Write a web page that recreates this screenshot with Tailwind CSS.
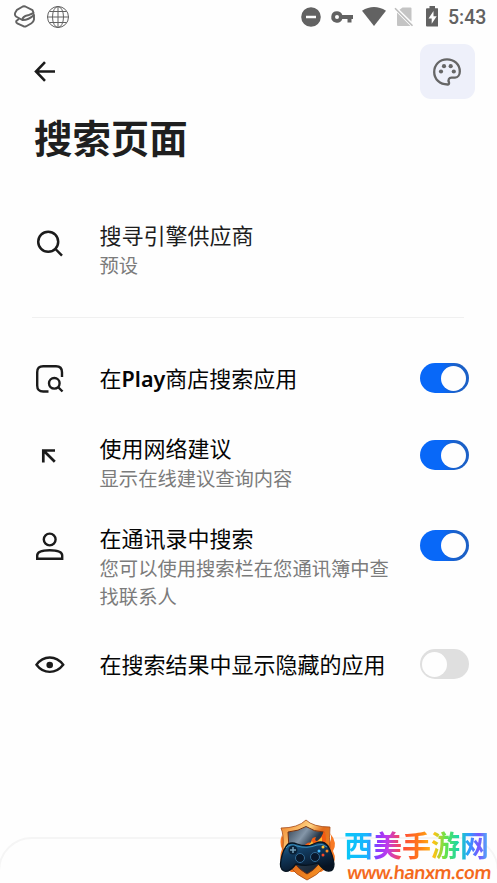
<!DOCTYPE html>
<html lang="zh-CN">
<head>
<meta charset="utf-8">
<title>搜索页面</title>
<script src="https://cdn.jsdelivr.net/npm/@tailwindcss/browser@4"></script>
</head>
<body class="bg-[#fefefe] font-['Noto_Sans_CJK_SC',sans-serif] text-[#050505]">
<div class="relative flex h-[883px] w-[497px] flex-col overflow-hidden">
  <!-- Status bar -->
  <header class="flex h-[34px] shrink-0 items-center justify-between pl-[13px] pr-[11px] text-[#626262]">
    <div class="flex items-center gap-[10px]">
      <svg class="h-[24px] w-[23px]" viewBox="0 0 23 24" fill="none" stroke="currentColor" stroke-width="1.900" stroke-linejoin="round" stroke-linecap="round"><path d="M9.300 15L3 11.500Q1.300 10 2.200 7.800L4 4.800L9.800 1.500Q11 1 12.300 1.500L19.500 5.200L20.600 8L15 10.300Q9.500 11.300 9.300 15Q15.500 15.200 21 10V14.500Q20.500 17 18.500 18.200L13.300 21.200Q11.800 22 10.300 21.200L4.200 18.300Q2.500 17 3.600 15.700L5.500 14.200"/></svg>
      <svg class="h-[24px] w-[24px]" viewBox="0 0 24 24" fill="none" stroke="currentColor" stroke-width="1"><circle cx="12" cy="12" r="10.500"/><ellipse cx="12" cy="12" rx="5.500" ry="10.500"/><path d="M12 1.500V22.500M1.500 12H22.500M3.500 6.500H20.500M3.500 17.500H20.500"/></svg>
    </div>
    <div class="flex items-center">
      <svg class="h-[24px] w-[137px]" viewBox="0 0 137 24" fill="currentColor"><path fill-rule="evenodd" d="M10 2.200a9.800 9.800 0 1 0 0 19.600a9.800 9.800 0 0 0 0-19.600M5 10.700h10v2.500H5z"/><path fill-rule="evenodd" d="M36 6.200a5.700 5.700 0 0 1 5.300 3.700H52v4h-1.500v3.500h-4v-3.500h-5.200A5.700 5.700 0 1 1 36 6.200m0 3.800a2 2 0 1 0 0 4a2 2 0 0 0 0-4"/><path d="M61 5.700Q73 -1.800 85 5.700L73 21Z"/><path fill="#c4c4c4" d="M101.500 2.500H109.500Q110.500 2.500 110.500 3.500V16.500L98.500 4.700ZM96 7.500V20Q96 21 97 21H109.500Z"/><path d="M94 3.300L111.500 20.800" stroke="#bcbcbc" stroke-width="1.600"/><path fill-rule="evenodd" d="M128.500 1h5.500v2.300h2.500q1 0 1 1V20.500q0 1-1 1H126q-1 0-1-1V4.300q0-1 1-1h2.500zM132.500 6l-5 7.500h3.200v5.300l5-7.600h-3.200z"/></svg>
      <span class="ml-[10px] w-[38px] whitespace-nowrap pt-[2px] font-[Roboto,sans-serif] text-[19.5px] font-medium leading-6">5:43</span>
    </div>
  </header>

  <nav class="mt-[10px] flex h-[55px] shrink-0 items-center justify-between pl-[34px] pr-[22px]">
    <svg class="h-[22px] w-[22px]" viewBox="0 0 22 22" fill="none" stroke="#1b1b1b" stroke-width="2.600"><path d="M21 10.500H2.500M11 1.200L2 10.500L11 19.800"/></svg>
    <div class="flex h-[55px] w-[55px] items-center justify-center rounded-[11px] bg-[#eef0fa] pr-[2px]">
      <svg class="h-[28px] w-[28px]" viewBox="0 0 28 28" fill="none" stroke="#666" stroke-width="2.300"><path d="M14 1.300C6.500 1.300 1.200 6.800 1.200 14S6.800 26.500 14.500 26.500C16 26.500 16.200 25.500 16 24.500C14.800 21.500 16 19.800 18.500 19.700H22C25 19.500 26.800 16.500 26.800 13.500C26.800 6.300 21 1.300 14 1.300Z"/><g fill="#666" stroke="none"><circle cx="8" cy="13.500" r="2.100"/><circle cx="11" cy="8.200" r="2.100"/><circle cx="17.700" cy="8.200" r="2.100"/><circle cx="20.800" cy="13.500" r="2.100"/></g></svg>
    </div>
  </nav>

  <h1 class="mt-[10px] h-[60px] shrink-0 pl-[34px] text-[38.4px] font-bold leading-[55px] text-[#1f1f1f]">搜索页面</h1>

  <main class="flex flex-col">
    <section class="mt-[52px] flex h-[58px] items-start">
      <div class="w-[99.600px] shrink-0 pl-[36px] pt-[9px]"><svg class="h-[28px] w-[28px]" viewBox="0 0 28 28" fill="none" stroke="#1b1b1b" stroke-width="2.500"><circle cx="12.200" cy="11.700" r="10"/><path d="M19 18.500L26 25.700"/></svg></div>
      <div><h2 class="h-[30px] text-[22px] leading-[26px] text-[#1d1d1d]">搜寻引擎供应商</h2><p class="text-[19.3px] leading-7 text-[#7b7b7b]">预设</p></div>
    </section>
    <hr class="ml-[32px] mt-[38px] w-[432px] border-[#f0f0f0]">

    <section class="mt-[46px] flex h-[30px] items-start">
      <div class="w-[99.600px] shrink-0 pl-[35px]"><svg class="h-[30px] w-[30px]" viewBox="0 0 30 30" fill="none" stroke="#1b1b1b" stroke-width="2.400"><path d="M13.500 27.500H8.200Q2.200 27.500 2.200 21.500V8.200Q2.200 2.200 8.200 2.200H21Q27 2.200 27 8.200V13"/><circle cx="19.300" cy="19.300" r="5.300"/><path d="M23 23L27.500 27.500"/></svg></div>
      <h2 class="w-[320.400px] text-[22px] leading-[26px]">在<span class="font-['Noto_Sans',sans-serif] text-[21.500px] font-semibold">Play</span>商店搜索应用</h2>
      <div class="-mt-px flex h-[30px] w-[49px] items-center justify-end rounded-full bg-[linear-gradient(90deg,#0868f8_45%,#1b60c7_75%)] px-[2.500px]"><i class="h-[25px] w-[25px] rounded-full bg-[#fefefe]"></i></div>
    </section>

    <section class="mt-[40px] flex h-[58px] items-start">
      <div class="w-[99.600px] shrink-0 pl-[41px] pt-[14px]"><svg class="h-[16px] w-[16px]" viewBox="0 0 16 16" fill="none" stroke="#1b1b1b" stroke-width="2.700"><path d="M2.300 14.500V2.500H14M2.500 2.500L13.800 13.800"/></svg></div>
      <div class="w-[320.400px]"><h2 class="h-[30px] text-[22px] leading-[26px]">使用网络建议</h2><p class="text-[19.3px] leading-7 text-[#7b7b7b]">显示在线建议查询内容</p></div>
      <div class="mt-[6px] flex h-[30px] w-[49px] items-center justify-end rounded-full bg-[linear-gradient(90deg,#0868f8_45%,#1b60c7_75%)] px-[2.500px]"><i class="h-[25px] w-[25px] rounded-full bg-[#fefefe]"></i></div>
    </section>

    <section class="mt-[32px] flex h-[86px] items-start">
      <div class="w-[99.600px] shrink-0 pl-[35px] pt-[7px]"><svg class="h-[30px] w-[30px]" viewBox="0 0 30 30" fill="none" stroke="#1b1b1b" stroke-width="2.400"><circle cx="14.700" cy="8.500" r="5.900"/><path d="M2.200 27.800V24.500C2.200 20.500 8 19.200 14.700 19.200S27.200 20.500 27.200 24.500V27.800Z"/></svg></div>
      <div class="w-[320.400px]"><h2 class="h-[30px] text-[22px] leading-[26px]">在通讯录中搜索</h2><p class="w-[292px] text-[19.3px] leading-7 text-[#7b7b7b]">您可以使用搜索栏在您通讯簿中查找联系人</p></div>
      <div class="mt-[6px] flex h-[31px] w-[49px] items-center justify-end rounded-full bg-[linear-gradient(90deg,#0868f8_45%,#1b60c7_75%)] px-[2.500px]"><i class="h-[25px] w-[25px] rounded-full bg-[#fefefe]"></i></div>
    </section>

    <section class="mt-[40px] flex h-[30px] items-start">
      <div class="w-[99.600px] shrink-0 pl-[35px] pt-[5px]"><svg class="h-[20px] w-[30px]" viewBox="0 0 30 20" fill="none" stroke="#1b1b1b" stroke-width="2.400"><path d="M1.500 9.800C5 4.800 9.200 2.500 14.800 2.500S24.500 4.800 28.200 9.800C24.500 14.600 20.300 16.900 14.800 16.900S5 14.600 1.500 9.800Z"/><circle cx="14.700" cy="10" r="3.300" fill="#1b1b1b" stroke="none"/></svg></div>
      <h2 class="w-[320.400px] text-[22px] leading-[26px]">在搜索结果中显示隐藏的应用</h2>
      <div class="-mt-px flex h-[30px] w-[49px] items-center rounded-full bg-[#dfdfdf] px-[2.500px]"><i class="h-[25px] w-[25px] rounded-full bg-[#fefefe]"></i></div>
    </section>
  </main>

  <div class="-mx-[2px] mt-[157px] h-[80px] shrink-0 rounded-t-[34px] border-2 border-[#f5f5f5]"></div>

  <!-- Site badge laid over the page -->
  <div class="absolute bottom-0 left-[278px] flex h-[65px] w-[219px]">
    <svg class="h-[65px] w-[60px] shrink-0" viewBox="0 0 60 65">
      <defs>
        <linearGradient id="rim" x2="1" y2="1"><stop stop-color="#ef7b20"/><stop offset=".35" stop-color="#ffd483"/><stop offset=".5" stop-color="#e06c1d"/><stop offset="1" stop-color="#ff9e24"/></linearGradient>
        <linearGradient id="steel" x2="1" y2="1"><stop stop-color="#334354"/><stop offset=".3" stop-color="#8496a8"/><stop offset=".52" stop-color="#273748"/><stop offset="1" stop-color="#111d2a"/></linearGradient>
        <linearGradient id="pad" x2=".5" y2="1"><stop stop-color="#2472a4"/><stop offset=".4" stop-color="#123c61"/><stop offset="1" stop-color="#071323"/></linearGradient>
      </defs>
      <path d="M5 48Q0 40 4 31Q1 24 4 17L9 27H50Q55 21 52 15Q60 25 55 33Q60 43 52 48L43 54H13Z" fill="#f87a25"/>
      <path d="M28 2Q35 9 52 9Q51 19 52 32Q51 52 29 62Q6 51 5 30Q6 17 3 10Q20 10 28 2Z" fill="url(#rim)" stroke="#a54a18" stroke-width=".800"/>
      <path d="M28 8.500Q36 14 46 14V32Q44 48 29 56Q13 47 11 31L10 14Q21 13 28 8.500Z" fill="url(#steel)" stroke="#713013" stroke-width="1"/>
      <path d="M25 29Q30 23 33 25Q33 19 38 19Q36 23 39 23Q44 20 46 12Q50 21 46 28L48 31H25Z" fill="#f45b12"/>
      <path d="M29 29L34 23L36 27L44 19L44 28Z" fill="#ffbc32"/>
      <path d="M10 26Q14 24 19 26Q29 30 38 25Q45 22 50 28Q55 37 56 46Q56 53 51 53Q47 54 40 45Q29 49 18 46Q11 55 6 53Q1 51 3 42Q5 31 10 26Z" fill="url(#pad)" stroke="#06131f" stroke-width="1.300"/>
      <path d="M8 30Q12 25 19 28Q29 31 39 27Q45 25 49 29" fill="none" stroke="#3c91bd" stroke-width="1"/>
      <circle cx="15" cy="32" r="4.500" fill="#0a2036"/><path d="M15 29V35M12 32H18" stroke="#739eb9" stroke-width="1.500"/>
      <circle cx="22" cy="40" r="4.500" fill="#09182b" stroke="#326c97"/><circle cx="37" cy="39" r="4.500" fill="#09182b" stroke="#326c97"/>
      <circle cx="45" cy="29" r="1.500" fill="#ffc22e"/><circle cx="41" cy="33" r="1.500" fill="#43baff"/><circle cx="49" cy="33" r="1.500" fill="#ff8a22"/><circle cx="45" cy="37" r="1.500" fill="#fa4625"/>
    </svg>
    <div class="flex flex-col pl-[6px] pt-[10px]">
      <div class="h-[35px] w-[145px] whitespace-nowrap bg-[linear-gradient(90deg,#08c8f5_0%,#18b4ff_16%,#8b37ff_23%,#c03bea_30%,#ff493c_40%,#ff7b17_52%,#ffc313_62%,#65e34b_70%,#18d6ad_79%,#2b9fff_86%,#7954ff_93%,#45bdf5_100%)] bg-clip-text text-[29px] font-bold leading-[32px] text-transparent">西美手游网</div>
      <div class="h-[20px] w-[145px] origin-bottom-left -skew-x-6 whitespace-nowrap pl-[2px] font-['Noto_Sans',sans-serif] text-[18px] font-semibold leading-[18px] tracking-[-.65px] text-[#f46a1d]">www.hanxm.com</div>
    </div>
  </div>
</div>
</body>
</html>
